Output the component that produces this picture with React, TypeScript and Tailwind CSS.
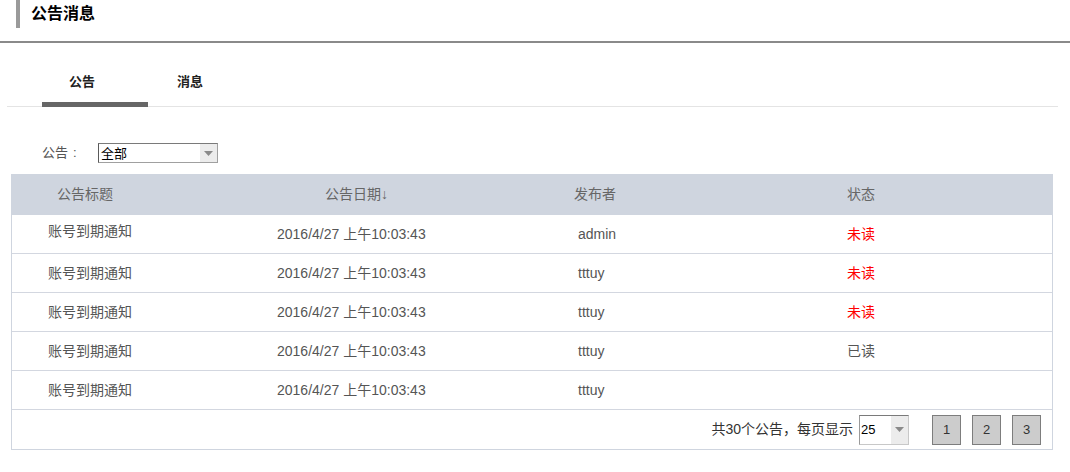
import React from "react";

const font = { fontFamily: '"Liberation Sans", "Noto Sans CJK SC", sans-serif' };

const rows = [
  { user: "admin", status: "未读", red: true },
  { user: "tttuy", status: "未读", red: true },
  { user: "tttuy", status: "未读", red: true },
  { user: "tttuy", status: "已读", red: false },
  { user: "tttuy", status: "", red: false },
];

function Arrow() {
  return (
    <div className="flex h-full w-[17px] items-center justify-center bg-[#ececec]">
      <svg width="9" height="5" viewBox="0 0 9 5">
        <path d="M0 0 L9 0 L4.5 5 Z" fill="#8a8a8a" />
      </svg>
    </div>
  );
}

export default function App() {
  return (
    <div className="h-[472px] w-[1070px] overflow-hidden bg-white text-[14px] text-[#555]" style={font}>
      {/* title */}
      <div className="flex h-[41px] items-start">
        <div className="ml-[16px] h-[28px] w-[4px] bg-[#9a9a9a]" />
        <div className="ml-[11px] mt-[4px] text-[16px] font-bold leading-[20px] text-black">公告消息</div>
      </div>
      <div className="h-[2px] w-full bg-[#8a8a8a]" />

      {/* tabs */}
      <div className="ml-[7px] mt-[19px] flex w-[1051px] border-b border-[#e4e4e4] pl-[35px]">
        <div className="mb-[-1px] flex h-[45px] w-[106px] items-center border-b-[5px] border-[#666] pl-[27px] text-[13px] font-bold text-[#222]">
          公告
        </div>
        <div className="flex h-[44px] w-[86px] items-center pb-[4px] pl-[29px] text-[13px] font-bold text-[#222]">
          消息
        </div>
      </div>

      {/* filter */}
      <div className="mt-[36px] flex h-[20px] items-center">
        <span className="ml-[42px] flex w-[56px] text-[13px] text-[#555]">
          <span>公告</span>
          <span className="ml-[5px]">:</span>
        </span>
        <div className="flex h-[20px] w-[120px] items-stretch border border-[#a0a0a0] border-t-[#7a7a7a] border-l-[#5a5a5a] bg-white">
          <div className="flex flex-1 items-center pl-[2px] text-[13px] leading-none text-black">全部</div>
          <Arrow />
        </div>
      </div>

      {/* table */}
      <div className="ml-[11px] mt-[11px] w-[1042px] border-x border-b border-[#cfd5df]">
        <div className="grid h-[41px] grid-cols-[188px_260px_260px_1fr] items-center bg-[#cfd5df] text-[#666]">
          <div className="pl-[45px]">公告标题</div>
          <div className="pl-[125px]">公告日期↓</div>
          <div className="pl-[114px]">发布者</div>
          <div className="pl-[127px]">状态</div>
        </div>
        {rows.map((r, i) => (
          <div
            key={i}
            className="grid h-[39px] grid-cols-[188px_260px_260px_1fr] items-center border-b border-[#d3d7e0] text-[#555]"
          >
            <div className={i === 0 ? "pl-[36px] pb-[5px]" : "pl-[36px]"}>账号到期通知</div>
            <div className="pl-[77px]">2016/4/27 上午10:03:43</div>
            <div className="pl-[118px]">{r.user}</div>
            <div className={"pl-[127px] " + (r.red ? "text-[#ff0000]" : "text-[#555]")}>{r.status}</div>
          </div>
        ))}
        <div className="flex h-[39px] items-center justify-end pr-[11px] text-[#333]">
          <span className="mr-[6px] text-[14px]">共30个公告，每页显示</span>
          <div className="flex h-[30px] w-[50px] items-stretch border border-[#c8c8c8] border-t-[#7a7a7a] border-l-[#9a9a9a] bg-white">
            <div className="flex flex-1 items-center pl-[1px] text-[13px] text-black">25</div>
            <Arrow />
          </div>
          <div className="ml-[23px] flex gap-[11px]">
            {["1", "2", "3"].map((p) => (
              <div
                key={p}
                className="flex h-[30px] w-[29px] items-center justify-center border border-[#7d7d7d] bg-[#cccccc] text-[13px] text-[#333]"
              >
                {p}
              </div>
            ))}
          </div>
        </div>
      </div>
    </div>
  );
}
